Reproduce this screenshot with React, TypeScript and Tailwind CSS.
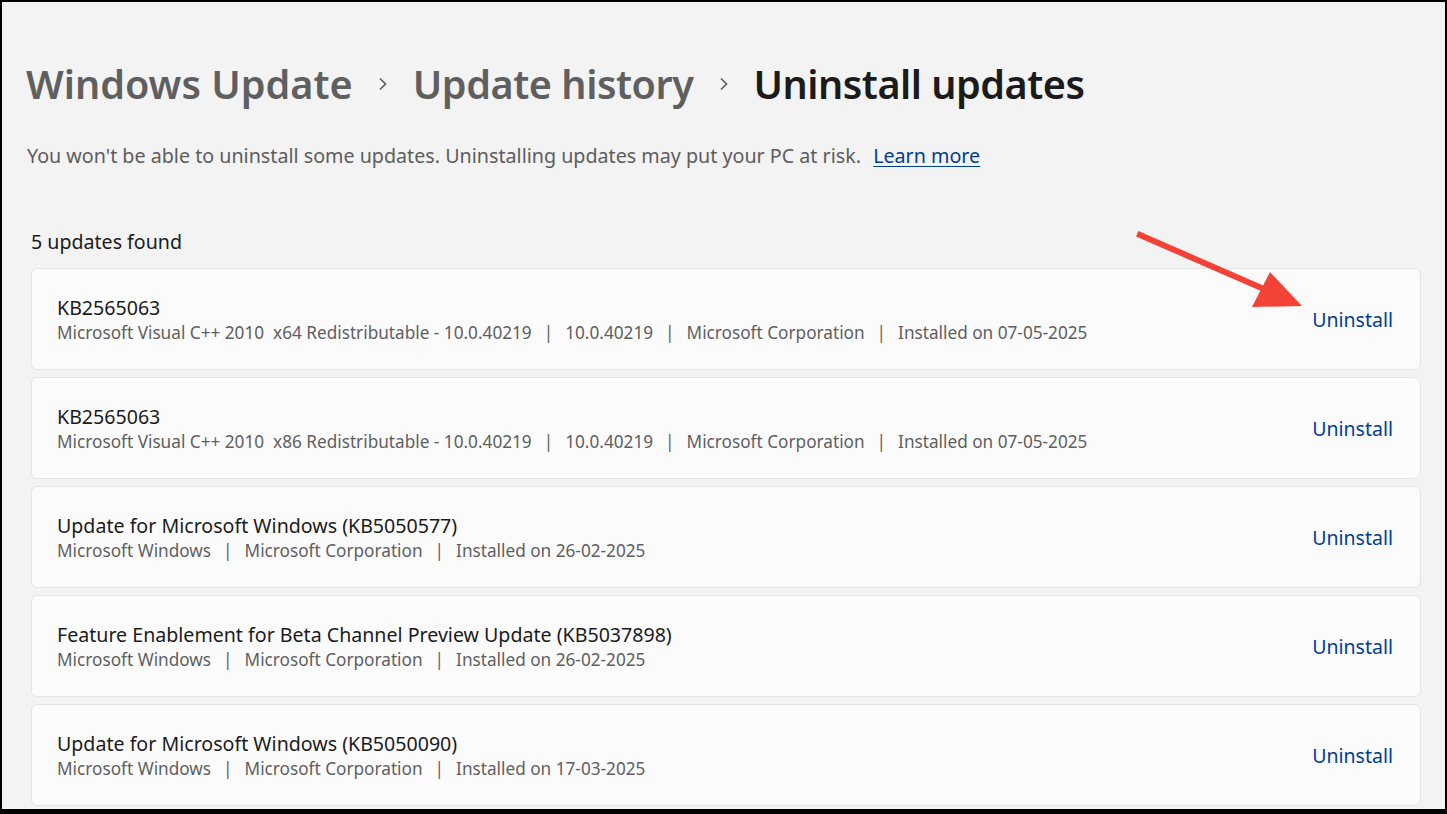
import React from "react";

type Update = {
  name: string;
  details: string[];
};

const UPDATES: Update[] = [
  {
    name: "KB2565063",
    details: [
      "Microsoft Visual C++ 2010  x64 Redistributable - 10.0.40219",
      "10.0.40219",
      "Microsoft Corporation",
      "Installed on 07-05-2025",
    ],
  },
  {
    name: "KB2565063",
    details: [
      "Microsoft Visual C++ 2010  x86 Redistributable - 10.0.40219",
      "10.0.40219",
      "Microsoft Corporation",
      "Installed on 07-05-2025",
    ],
  },
  {
    name: "Update for Microsoft Windows (KB5050577)",
    details: ["Microsoft Windows", "Microsoft Corporation", "Installed on 26-02-2025"],
  },
  {
    name: "Feature Enablement for Beta Channel Preview Update (KB5037898)",
    details: ["Microsoft Windows", "Microsoft Corporation", "Installed on 26-02-2025"],
  },
  {
    name: "Update for Microsoft Windows (KB5050090)",
    details: ["Microsoft Windows", "Microsoft Corporation", "Installed on 17-03-2025"],
  },
];

function Chevron() {
  return (
    <svg width="14" height="16" viewBox="0 0 14 16" className="shrink-0">
      <path d="M4 2.5 L9.5 8 L4 13.5" fill="none" stroke="#5f5f5f" strokeWidth="1.7" />
    </svg>
  );
}

function UpdateRow({ update }: { update: Update }) {
  return (
    <div className="flex h-[102px] items-center justify-between rounded-[6px] border border-[#e5e5e5] bg-[#fbfbfb] pl-[25px] pr-[27px]">
      <div className="flex flex-col">
        <div className="text-[19.6px] leading-[27px] text-[#1b1b1b]">{update.name}</div>
        <div className="flex whitespace-pre text-[17.2px] leading-[24px] text-[#5f5f5f]">
          {update.details.map((d, i) => (
            <React.Fragment key={i}>
              {i > 0 && <span className="px-[12px]">|</span>}
              <span>{d}</span>
            </React.Fragment>
          ))}
        </div>
      </div>
      <button className="mt-[2px] text-[19.5px] text-[#003e92]">Uninstall</button>
    </div>
  );
}

export default function App() {
  return (
    <div
      className="relative h-[814px] w-full overflow-hidden border-2 border-b-[5px] border-black bg-[#f3f3f3]"
      style={{ fontFamily: '"Segoe UI", "Noto Sans", sans-serif' }}
    >
      {/* Breadcrumb header */}
      <div className="flex items-center gap-[23px] pl-[24px] pt-[54px] text-[39.6px] font-semibold leading-[56px]">
        <span className="text-[#5f5f5f]">Windows Update</span>
        <Chevron />
        <span className="tracking-[-0.45px] text-[#5f5f5f]">Update history</span>
        <Chevron />
        <span className="tracking-[-0.5px] text-[#1b1b1b]">Uninstall updates</span>
      </div>

      <p className="mt-[30px] pl-[25px] text-[19.7px] leading-[28px] text-[#5d5d5d]">
        You won't be able to uninstall some updates. Uninstalling updates may put your PC at risk.{" "}
        <a className="ml-[7px] text-[#003e92] underline underline-offset-[3px]">Learn more</a>
      </p>

      <div className="pl-[29px] pr-[24px] pt-[58px]">
        <div className="mb-[12px] text-[19.6px] leading-[28px] text-[#1b1b1b]">5 updates found</div>
        <div className="flex flex-col gap-[7px]">
          {UPDATES.map((u, i) => (
            <UpdateRow key={i} update={u} />
          ))}
        </div>
      </div>

      {/* annotation arrow */}
      <svg className="pointer-events-none absolute left-0 top-0" width="1447" height="814">
        <line x1="1138" y1="233" x2="1262" y2="287" stroke="#f44336" strokeWidth="6" strokeLinecap="square" />
        <polygon points="1300,304 1250,305 1268,270" fill="#f44336" />
      </svg>
    </div>
  );
}
